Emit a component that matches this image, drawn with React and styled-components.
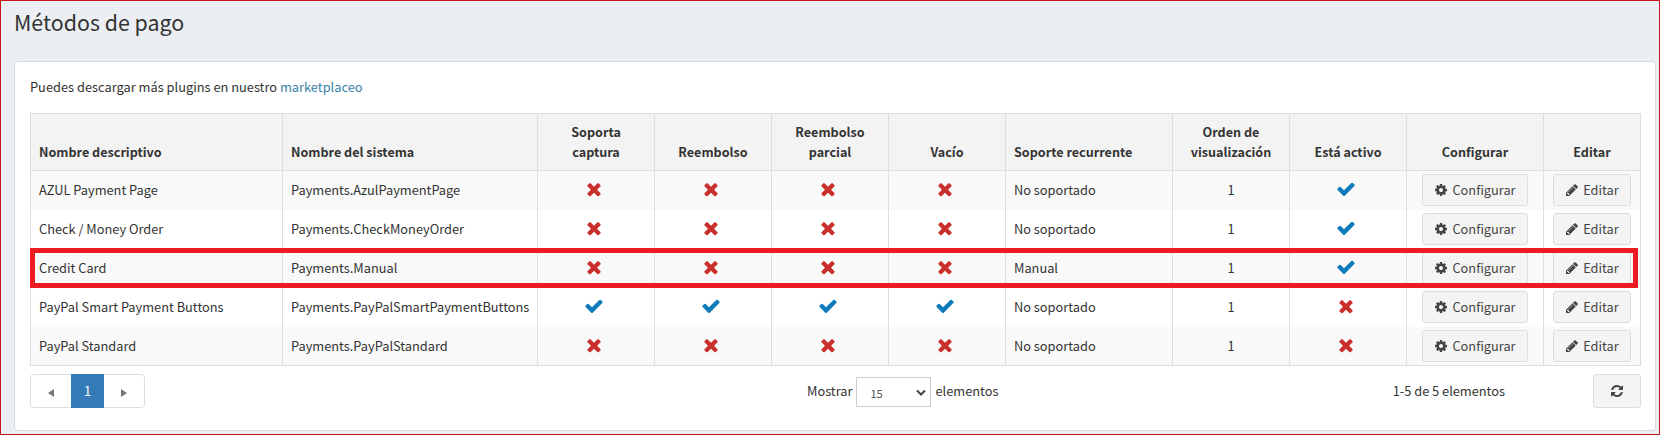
import React from "react";
import styled, { createGlobalStyle } from "styled-components";

const GlobalStyle = createGlobalStyle`
  *, *::before, *::after { box-sizing: border-box; }
  body {
    margin: 0;
    font-family: "Noto Sans CJK SC", "Open Sans", sans-serif;
    font-size: 12.8px;
    line-height: 20px;
    color: #333;
    overflow: hidden;
  }
`;

const Page = styled.main`
  height: 435px;
  padding: 8px 3px 4px 13px;
  background: #ebeff4;
  border: 1px solid #c4161c;
`;

const Title = styled.h1`
  margin: 0 0 26px;
  font-size: 21.4px;
  font-weight: 400;
  line-height: 26px;
`;

const Panel = styled.section`
  height: 370px;
  padding: 15px 14px 0 15px;
  background: #fff;
  border: 1px solid #d5dbe1;
  border-radius: 4px;
`;

const Intro = styled.p`
  margin: 0 0 16px;
  height: 20px;
  font-size: 12.84px;
`;

const Link = styled.a`
  color: #3a82ab;
  text-decoration: none;
`;

const TableWrap = styled.div`
  position: relative;
`;

const Table = styled.table`
  width: 1611px;
  table-layout: fixed;
  border-collapse: collapse;
  border: 1px solid #dedede;
`;

const Th = styled.th`
  height: 57px;
  padding: 7px 8px 8px;
  background: #f3f3f3;
  border: 1px solid #dedede;
  font-size: 12.6px;
  font-weight: 700;
  line-height: 20px;
  text-align: ${(p) => p.$align || "center"};
  vertical-align: bottom;
`;

const Tr = styled.tr`
  height: 39px;
  background: ${(p) => (p.$striped ? "#f9f9f9" : "#fff")};
`;

const Td = styled.td`
  height: 39px;
  padding: 0 8px;
  border-left: 1px solid #dedede;
  text-align: ${(p) => p.$align || "center"};
  vertical-align: middle;
  white-space: nowrap;
`;

const Svg = styled.svg`
  display: inline-block;
  flex: none;
  width: ${(p) => p.$size}px;
  height: ${(p) => p.$size}px;
  fill: currentColor;
`;

const Status = styled.span`
  display: flex;
  justify-content: center;
  padding: 0 5px 2px 0;
  color: ${(p) => (p.$on ? "#0f7bbb" : "#c9302c")};
`;

const Button = styled.button`
  display: inline-flex;
  align-items: center;
  justify-content: center;
  vertical-align: middle;
  gap: 4px;
  width: ${(p) => p.$width}px;
  height: ${(p) => p.$height || 32}px;
  padding: 0;
  font: inherit;
  color: #444;
  background: #f4f4f4;
  border: 1px solid #ddd;
  border-radius: 3px;
`;

const Highlight = styled.div`
  position: absolute;
  top: 135px;
  left: 0;
  width: 1608px;
  height: 40px;
  border: 5px solid #ed1c24;
  pointer-events: none;
`;

const Footer = styled.footer`
  display: grid;
  grid-template-columns: 777px auto 1fr;
  align-items: start;
  margin-top: 8px;
`;

const Pager = styled.nav`
  display: flex;
  width: 115px;
  height: 34px;
  border: 1px solid #ddd;
  border-radius: 4px;
`;

const PagerItem = styled.span`
  display: flex;
  flex: 1;
  align-items: center;
  justify-content: center;
  color: #777;
`;

const PagerCurrent = styled(PagerItem)`
  flex: none;
  width: 33px;
  margin: -1px 0;
  padding-bottom: 1px;
  color: #fff;
  background: #337ab7;
`;

const Arrow = styled.i`
  border: 4px solid transparent;
  border-width: 4px 6px;
  margin-top: 4px;
  ${(p) => (p.$dir === "left" ? "border-left-width: 0; border-right-color: #777;" : "border-right-width: 0; border-left-color: #777;")}
`;

const PageSize = styled.div`
  display: flex;
  align-items: flex-start;
  gap: 4px;
  padding-top: 3px;
  line-height: 28px;
`;

const Select = styled.div`
  display: flex;
  align-items: center;
  justify-content: space-between;
  width: 75px;
  height: 30px;
  padding: 2px 4px 0 13px;
  font-size: 11px;
  color: #555;
  border: 1px solid #ccc;
`;

const Summary = styled.div`
  display: flex;
  justify-content: flex-end;
  align-items: center;
  gap: 88px;
`;

const ICONS = {
  times: "M1490 1322q0 40-28 68l-136 136q-28 28-68 28t-68-28l-294-294-294 294q-28 28-68 28t-68-28l-136-136q-28-28-28-68t28-68l294-294-294-294q-28-28-28-68t28-68l136-136q28-28 68-28t68 28l294 294 294-294q28-28 68-28t68 28l136 136q28 28 28 68t-28 68l-294 294 294 294q28 28 28 68z",
  check: "M1671 566q0 40-28 68l-724 724-136 136q-28 28-68 28t-68-28l-136-136-362-362q-28-28-28-68t28-68l136-136q28-28 68-28t68 28l294 295 656-657q28-28 68-28t68 28l136 136q28 28 28 68z",
  cog: "M1152 896q0-106-75-181t-181-75-181 75-75 181 75 181 181 75 181-75 75-181zm512-109v222q0 12-8 23t-20 13l-185 28q-19 54-39 91 35 50 107 138 10 12 10 25t-9 23q-27 37-99 108t-94 71q-12 0-26-9l-138-108q-44 23-91 38-16 136-29 186-7 28-36 28h-222q-14 0-24.5-8.5t-11.5-21.5l-28-184q-49-16-90-37l-141 107q-10 9-25 9-14 0-25-11-126-114-165-168-7-10-7-23 0-12 8-23 15-21 51-66.5t54-70.5q-27-50-41-99l-183-27q-13-2-21-12.5t-8-23.5v-222q0-12 8-23t19-13l186-28q14-46 39-92-40-57-107-138-10-12-10-24 0-10 9-23 26-36 98.5-107.5t94.5-71.5q13 0 26 10l138 107q44-23 91-38 16-136 29-186 7-28 36-28h222q14 0 24.5 8.5t11.5 21.5l28 184q49 16 90 37l142-107q9-9 24-9 13 0 25 10 129 119 165 170 7 8 7 22 0 12-8 23-15 21-51 66.5t-54 70.5q26 50 41 98l183 28q13 2 21 12.5t8 23.5z",
  pencil: "M491 1536l91-91-235-235-91 91v107h128v128h107zm523-928q0-22-22-22-10 0-17 7l-542 542q-7 7-7 17 0 22 22 22 10 0 17-7l542-542q7-7 7-17zm-54-192l416 416-832 832h-416v-416zm683 96q0 53-37 90l-166 166-416-416 166-165q36-38 90-38 53 0 91 38l235 234q37 39 37 91z",
  refresh: "M1639 1056q0 5-1 7-64 268-268 434.5t-478 166.5q-146 0-282.5-55t-243.5-157l-129 129q-19 19-45 19t-45-19-19-45v-448q0-26 19-45t45-19h448q26 0 45 19t19 45-19 45l-137 137q71 66 161 102t187 36q134 0 250-65t186-179q11-17 53-117 8-23 30-23h192q13 0 22.5 9.5t9.5 22.5zm25-800v448q0 26-19 45t-45 19h-448q-26 0-45-19t-19-45 19-45l138-138q-148-137-349-137-134 0-250 65t-186 179q-11 17-53 117-8 23-30 23h-199q-13 0-22.5-9.5t-9.5-22.5v-7q65-268 270-434.5t480-166.5q146 0 284 55.5t245 156.5l130-129q19-19 45-19t45 19 19 45z",
};

const Icon = ({ name, size = 14 }) => (
  <Svg $size={size} viewBox="0 0 1792 1792" aria-hidden="true">
    <path d={ICONS[name]} />
  </Svg>
);

const Flag = ({ on }) => (
  <Status $on={on}>
    <Icon name={on ? "check" : "times"} size={20} />
  </Status>
);

const COLUMNS = [
  { label: "Nombre descriptivo", width: 252, align: "left" },
  { label: "Nombre del sistema", width: 255, align: "left" },
  { label: "Soporta captura", width: 117 },
  { label: "Reembolso", width: 117 },
  { label: "Reembolso parcial", width: 117 },
  { label: "Vacío", width: 117 },
  { label: "Soporte recurrente", width: 167, align: "left" },
  { label: "Orden de visualización", width: 117 },
  { label: "Está activo", width: 117 },
  { label: "Configurar", width: 137 },
  { label: "Editar", width: 97 },
];

const METHODS = [
  { name: "AZUL Payment Page", system: "Payments.AzulPaymentPage", supports: false, recurring: "No soportado", active: true },
  { name: "Check / Money Order", system: "Payments.CheckMoneyOrder", supports: false, recurring: "No soportado", active: true },
  { name: "Credit Card", system: "Payments.Manual", supports: false, recurring: "Manual", active: true },
  { name: "PayPal Smart Payment Buttons", system: "Payments.PayPalSmartPaymentButtons", supports: true, recurring: "No soportado", active: false },
  { name: "PayPal Standard", system: "Payments.PayPalStandard", supports: false, recurring: "No soportado", active: false },
];

export default function App() {
  return (
    <Page>
      <GlobalStyle />
      <Title>Métodos de pago</Title>
      <Panel>
        <Intro>
          Puedes descargar más plugins en nuestro <Link>marketplaceo</Link>
        </Intro>
        <TableWrap>
          <Table>
            <colgroup>
              {COLUMNS.map((c) => (
                <col key={c.label} width={c.width} />
              ))}
            </colgroup>
            <thead>
              <tr>
                {COLUMNS.map((c) => (
                  <Th key={c.label} $align={c.align}>{c.label}</Th>
                ))}
              </tr>
            </thead>
            <tbody>
              {METHODS.map((m, i) => (
                <Tr key={m.name} $striped={i % 2 === 0}>
                  <Td $align="left">{m.name}</Td>
                  <Td $align="left">{m.system}</Td>
                  <Td><Flag on={m.supports} /></Td>
                  <Td><Flag on={m.supports} /></Td>
                  <Td><Flag on={m.supports} /></Td>
                  <Td><Flag on={m.supports} /></Td>
                  <Td $align="left">{m.recurring}</Td>
                  <Td>1</Td>
                  <Td><Flag on={m.active} /></Td>
                  <Td><Button $width={106}><Icon name="cog" />Configurar</Button></Td>
                  <Td><Button $width={78}><Icon name="pencil" />Editar</Button></Td>
                </Tr>
              ))}
            </tbody>
          </Table>
          <Highlight />
        </TableWrap>
        <Footer>
          <Pager>
            <PagerItem><Arrow $dir="left" /></PagerItem>
            <PagerCurrent>1</PagerCurrent>
            <PagerItem><Arrow $dir="right" /></PagerItem>
          </Pager>
          <PageSize>
            Mostrar
            <Select>
              15
              <svg width="10" height="8" viewBox="0 0 10 8" fill="none" stroke="#444" strokeWidth="2">
                <path d="M1 1.5L5 5.5L9 1.5" />
              </svg>
            </Select>
            elementos
          </PageSize>
          <Summary>
            1-5 de 5 elementos
            <Button $width={48} $height={34} aria-label="Actualizar"><Icon name="refresh" /></Button>
          </Summary>
        </Footer>
      </Panel>
    </Page>
  );
}
